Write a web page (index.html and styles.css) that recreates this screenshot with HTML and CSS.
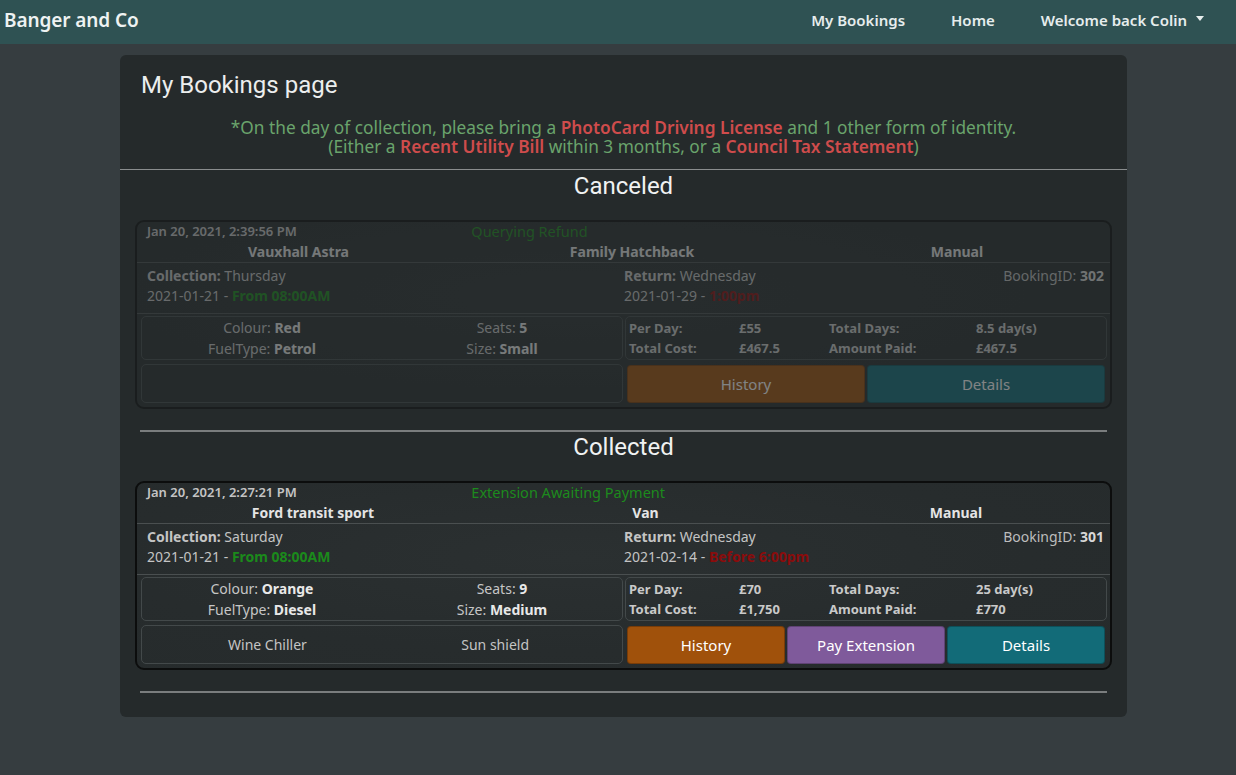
FILE: index.html
```html
<!DOCTYPE html>
<html lang="en">
<head>
<meta charset="utf-8">
<title>My Bookings</title>
<link rel="stylesheet" href="styles.css">
</head>
<body>
<nav class="navbar">
  <div class="brand">Banger and Co</div>
  <ul class="nav-links">
    <li>My Bookings</li>
    <li>Home</li>
    <li class="dropdown">Welcome back Colin <span class="caret"></span></li>
  </ul>
</nav>

<main class="panel">
  <div class="panel-head">
    <h1 class="page-title">My Bookings page</h1>
    <p class="notice">*On the day of collection, please bring a <b class="hl">PhotoCard Driving License</b> and 1 other form of identity.<br>(Either a <b class="hl">Recent Utility Bill</b> within 3 months, or a <b class="hl">Council Tax Statement</b>)</p>
  </div>
  <hr class="rule rule-full">

  <section class="group">
    <h2 class="group-title">Canceled</h2>
    <article class="booking booking-faded">
      <div class="row-meta">
        <span class="stamp">Jan 20, 2021, 2:39:56 PM</span>
        <span class="status">Querying Refund</span>
        <span></span>
      </div>
      <div class="row-names names-a">
        <span>Vauxhall Astra</span>
        <span>Family Hatchback</span>
        <span>Manual</span>
      </div>
      <div class="row-dates">
        <div class="date-col">
          <div><b>Collection:</b> Thursday</div>
          <div>2021-01-21 - <b class="ok">From 08:00AM</b></div>
        </div>
        <div class="date-col">
          <div class="split"><span><b>Return:</b> Wednesday</span><span class="bid">BookingID: <b>302</b></span></div>
          <div>2021-01-29 - <b class="late">1:00pm</b></div>
        </div>
      </div>
      <div class="row-info">
        <div class="box specs">
          <div>Colour: <b>Red</b></div>
          <div>Seats: <b>5</b></div>
          <div>FuelType: <b>Petrol</b></div>
          <div>Size: <b>Small</b></div>
        </div>
        <div class="box costs">
          <span>Per Day:</span><span>£55</span><span>Total Days:</span><span>8.5 day(s)</span>
          <span>Total Cost:</span><span>£467.5</span><span>Amount Paid:</span><span>£467.5</span>
        </div>
      </div>
      <div class="row-actions">
        <div class="box extras"></div>
        <div class="buttons">
          <button class="btn btn-history">History</button>
          <button class="btn btn-details">Details</button>
        </div>
      </div>
    </article>
  </section>
  <hr class="rule">

  <section class="group">
    <h2 class="group-title">Collected</h2>
    <article class="booking booking-active">
      <div class="row-meta">
        <span class="stamp">Jan 20, 2021, 2:27:21 PM</span>
        <span class="status">Extension Awaiting Payment</span>
        <span></span>
      </div>
      <div class="row-names names-b">
        <span>Ford transit sport</span>
        <span>Van</span>
        <span>Manual</span>
      </div>
      <div class="row-dates">
        <div class="date-col">
          <div><b>Collection:</b> Saturday</div>
          <div>2021-01-21 - <b class="ok">From 08:00AM</b></div>
        </div>
        <div class="date-col">
          <div class="split"><span><b>Return:</b> Wednesday</span><span class="bid">BookingID: <b>301</b></span></div>
          <div>2021-02-14 - <b class="late">Before 6:00pm</b></div>
        </div>
      </div>
      <div class="row-info">
        <div class="box specs">
          <div>Colour: <b>Orange</b></div>
          <div>Seats: <b>9</b></div>
          <div>FuelType: <b>Diesel</b></div>
          <div>Size: <b>Medium</b></div>
        </div>
        <div class="box costs">
          <span>Per Day:</span><span>£70</span><span>Total Days:</span><span>25 day(s)</span>
          <span>Total Cost:</span><span>£1,750</span><span>Amount Paid:</span><span>£770</span>
        </div>
      </div>
      <div class="row-actions">
        <div class="box extras">
          <span>Wine Chiller</span>
          <span>Sun shield</span>
        </div>
        <div class="buttons">
          <button class="btn btn-history">History</button>
          <button class="btn btn-pay">Pay Extension</button>
          <button class="btn btn-details">Details</button>
        </div>
      </div>
    </article>
  </section>
  <hr class="rule">
</main>
</body>
</html>
```

FILE: styles.css
```css
* { box-sizing: border-box; }

html, body {
  margin: 0;
  padding: 0;
}

body {
  background: #363d40;
  font-family: "Noto Sans", "Open Sans", sans-serif;
  color: #d6d6d6;
  min-height: 775px;
}

.navbar {
  height: 44px;
  background: #2f5253;
  display: flex;
  align-items: center;
  justify-content: space-between;
  padding: 0 32px 4px 4px;
}

.brand {
  font-size: 19px;
  font-weight: 600;
  color: #eef2f2;
  letter-spacing: -0.1px;
}

.nav-links {
  list-style: none;
  margin: 0;
  padding: 0;
  display: flex;
  gap: 46px;
  font-size: 15px;
  font-weight: 600;
  color: #e6eded;
}

.dropdown {
  display: flex;
  align-items: center;
  gap: 9px;
}

.caret {
  width: 0;
  height: 0;
  border-left: 4.5px solid transparent;
  border-right: 4.5px solid transparent;
  border-top: 5px solid #e6eded;
  margin-top: -3px;
}

.panel {
  width: 1007px;
  margin: 11px 0 0 120px;
  background: #252a2b;
  border-radius: 6px;
  padding-bottom: 25px;
}

.panel-head {
  padding: 14px 21px 13px;
}

.page-title {
  margin: 0;
  font-family: Roboto, sans-serif;
  font-weight: 400;
  font-size: 24px;
  line-height: 32px;
  color: #eceeee;
}

.notice {
  margin: 17px 0 0;
  text-align: center;
  font-size: 17.3px;
  line-height: 19px;
  color: #6aa46c;
}

.hl {
  color: #cf4c4c;
  font-weight: 600;
}

.rule {
  border: 0;
  height: 2px;
  background: #7a7d7e;
  margin: 0 20px -1px;
}

.rule-full {
  margin: 0;
  height: 1px;
  background: #8a8d8e;
}

.group {
  padding: 0 15px 21px;
}

.group-title {
  margin: 1px 0 19px;
  font-family: Roboto, sans-serif;
  font-weight: 400;
  font-size: 24px;
  line-height: 30px;
  text-align: center;
  color: #f0f2f2;
}

.booking {
  border: 2px solid #0c0d0d;
  border-radius: 9px;
  background: radial-gradient(ellipse at 45% 40%, #2b3031 0%, #272c2d 60%, #262b2c 100%);
  padding-bottom: 4px;
  font-size: 14px;
  color: #c8c8c8;
}

.booking-faded {
  opacity: 0.42;
}

.row-meta {
  display: grid;
  grid-template-columns: 1fr 1fr 1fr;
  height: 18px;
  line-height: 18px;
}

.row-meta > span {
  padding-left: 10px;
}

.stamp {
  font-size: 13px;
  font-weight: 600;
  color: #c4c4c4;
}

.status {
  color: #1d8a1d;
  font-size: 14.5px;
}

.row-names {
  display: grid;
  height: 22px;
  line-height: 22px;
  text-align: center;
  font-weight: 700;
  color: #e4e4e4;
  border-bottom: 1px solid #4a4f50;
  margin-top: 1px;
}

.names-a { grid-template-columns: 323px 344px 1fr; }
.names-b { grid-template-columns: 352px 313px 1fr; }

.row-dates {
  display: grid;
  grid-template-columns: 477px 1fr;
  padding: 3px 6px 7px 10px;
  line-height: 20px;
  font-size: 14px;
  border-bottom: 1px solid #4a4f50;
  color: #c4c4c4;
}

.row-dates b {
  font-weight: 700;
}

.split {
  display: flex;
  justify-content: space-between;
}

.bid {
  color: #bdbdbd;
}

.bid b {
  color: #d8d8d8;
}

.ok {
  color: #1b8a1b;
}

.late {
  color: #8a0c0c;
}

.row-info {
  display: grid;
  grid-template-columns: 482px 482px;
  gap: 2px;
  padding: 2px 3px 0 4px;
}

.box {
  border: 1px solid #43494a;
  border-radius: 5px;
}

.specs {
  height: 44px;
  display: grid;
  grid-template-columns: 1fr 1fr;
  text-align: center;
  line-height: 20px;
  padding-top: 1px;
  color: #c6c6c6;
}

.specs b {
  color: #e8e8e8;
}

.costs {
  height: 44px;
  display: grid;
  grid-template-columns: 110px 90px 147px 1fr;
  align-content: start;
  padding: 1px 0 0 3px;
  line-height: 20px;
  font-size: 13px;
  font-weight: 700;
  color: #c9c9c9;
}

.row-actions {
  display: grid;
  grid-template-columns: 482px 482px;
  gap: 2px;
  padding: 4px 3px 0 4px;
}

.extras {
  height: 39px;
  display: flex;
  justify-content: space-between;
  align-items: center;
  padding: 0 93px 0 86px;
  color: #c4c4c4;
}

.buttons {
  display: flex;
  gap: 2px;
  padding: 1px 2px 0;
}

.btn {
  flex: 1 1 0;
  height: 38px;
  border: 1px solid rgba(0, 0, 0, 0.25);
  border-radius: 4px;
  font-family: "Noto Sans", "Open Sans", sans-serif;
  font-size: 15px;
  color: #ffffff;
  cursor: pointer;
}

.btn-history { background: #a0510b; }
.btn-pay { background: #7f5a9b; }
.btn-details { background: #126b78; }
```
